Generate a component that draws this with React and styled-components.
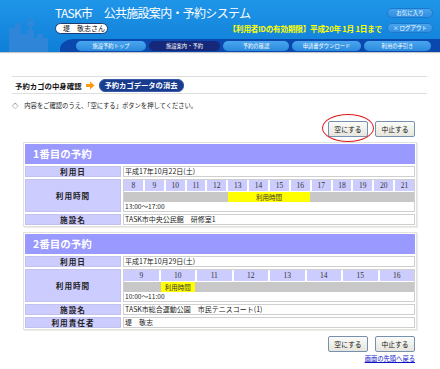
import React from 'react';
import styled, { createGlobalStyle } from 'styled-components';

const GlobalStyle = createGlobalStyle`
  body {
    margin: 0;
    background: #fff;
    font-family: "Noto Sans CJK JP", "Liberation Sans", sans-serif;
    color: #222;
  }
`;

const Header = styled.header`
  display: grid;
  grid-template-columns: 60px 1fr;
  grid-template-rows: 39px 13px;
  height: 52px;
  background: linear-gradient(#1f95e8, #0f7fd8);
  box-shadow: 0 1px 1px #c8c8c8;
`;

const Skyline = styled.svg`
  grid-column: 1;
  grid-row: 1 / 3;
  display: block;
`;

const Top = styled.div`
  display: flex;
  flex-direction: column;
  gap: 3px;
  padding: 6px 7px 0 0;
  margin-left: -5px;
`;

const TopRow = styled.div`
  display: flex;
  align-items: center;
  height: ${p => p.h}px;
`;

const SiteTitle = styled.h1`
  margin: 0;
  font-size: 12px;
  font-weight: 400;
  color: #fff;
  letter-spacing: -0.7px;
  white-space: nowrap;
`;

const NamePill = styled.div`
  width: 53px;
  height: 11px;
  box-sizing: border-box;
  border: 1px solid #1d3b70;
  border-radius: 6px;
  background: #fff;
  font-size: 7px;
  line-height: 9px;
  padding-left: 7px;
  color: #111;
`;

const Expiry = styled.div`
  margin-left: auto;
  margin-right: 5px;
  font-size: 7.6px;
  font-weight: 700;
  color: #ffff00;
  letter-spacing: -0.2px;
  white-space: nowrap;
`;

const SmallButton = styled.div`
  width: 46px;
  height: 10px;
  margin-left: ${p => (p.push ? 'auto' : '0')};
  border-radius: 5px;
  background: linear-gradient(#4aa6ee, #2c8ce0);
  box-shadow: inset 0 0 0 1px #1b78cc;
  color: #fff;
  font-size: 5.5px;
  line-height: 10px;
  text-align: center;
`;

const NavStrip = styled.nav`
  grid-column: 2;
  grid-row: 2;
  display: flex;
  align-items: flex-end;
  gap: 3px;
  padding: 3px 7px 1px 16px;
  background: #0a48ae;
  border-top-left-radius: 14px 10px;
`;

const NavTab = styled.div`
  width: ${p => p.w}px;
  height: 10px;
  border-radius: 5px;
  background: ${p => (p.active ? '#16287a' : 'linear-gradient(#4aa6ee, #2a8ade)')};
  color: #fff;
  font-size: 5.3px;
  line-height: 10px;
  text-align: center;
`;

const Page = styled.main`
  padding: 24px 13px 0 12px;
`;

const Crumbs = styled.div`
  display: flex;
  align-items: center;
  gap: 4px;
  height: 16px;
  border-top: 1px solid #dedede;
  border-bottom: 1px solid #dedede;
  padding-left: 3px;
`;

const CrumbText = styled.span`
  font-size: 7.4px;
  font-weight: 700;
  color: #111;
`;

const CrumbCurrent = styled.span`
  height: 11px;
  padding: 0 5px;
  border-radius: 6px;
  background: #183c8e;
  border: 1px solid #3a5aa8;
  color: #fff;
  font-size: 7.3px;
  font-weight: 700;
  line-height: 11px;
`;

const Note = styled.p`
  margin: 7px 0 0;
  height: 10px;
  font-size: 6.3px;
  line-height: 10px;
  color: #222;
  display: flex;
  align-items: center;
  gap: 6px;
`;

const Actions = styled.div`
  position: relative;
  display: flex;
  justify-content: flex-end;
  gap: 7px;
  margin: ${p => p.m};
`;

const Button = styled.button`
  width: 40px;
  height: 16px;
  padding: 0;
  border: 1px solid #7890b0;
  border-radius: 2px;
  background: linear-gradient(#fbfbf8, #e6e6de);
  font-family: inherit;
  font-size: 6.8px;
  line-height: 14px;
  color: #111;
`;

const Circle = styled.div`
  position: absolute;
  right: 41px;
  top: -7px;
  width: 50px;
  height: 26px;
  border: 1.5px solid #e01818;
  border-radius: 50%;
  pointer-events: none;
`;

const Card = styled.section`
  display: grid;
  grid-template-columns: 96px 1fr;
  grid-template-rows: ${p => p.rows};
  gap: 2px;
  margin: ${p => p.m} 10px 0 11px;
  padding: 1px;
  border: 1px solid #e2e2da;
  box-shadow: 1px 1px 0 #ececec;
`;

const CardTitle = styled.h2`
  grid-column: 1 / 3;
  margin: 0;
  padding-left: 8px;
  background: #9999ff;
  color: #fff;
  font-size: 10.5px;
  font-weight: 700;
  line-height: 20px;
`;

const Label = styled.div`
  display: flex;
  align-items: center;
  justify-content: center;
  box-sizing: border-box;
  background: #ccccff;
  border: 1px solid #c2c2ee;
  font-size: 7.6px;
  line-height: 9px;
  font-weight: 700;
  letter-spacing: 1px;
  color: #222;
`;

const Value = styled.div`
  display: flex;
  flex-direction: column;
  justify-content: center;
  box-sizing: border-box;
  border: 1px solid #cfcfcf;
  padding: ${p => (p.grid ? '0' : '0 0 0 1px')};
  font-size: 7px;
  line-height: 9px;
  color: #222;
  overflow: hidden;
`;

const Hours = styled.div`
  display: grid;
  grid-template-columns: repeat(${p => p.n}, 1fr);
  column-gap: 2px;
  height: ${p => p.h}px;
  background: ${p => p.bg};
  flex: none;
`;

const Hour = styled.div`
  background: #ccccff;
  text-align: center;
  font-family: "Liberation Serif", serif;
  font-size: 7.5px;
  line-height: 11px;
  color: #333;
`;

const Used = styled.div`
  grid-column: ${p => p.from} / ${p => p.to};
  background: #ffff00;
  text-align: center;
  font-size: 6.5px;
  line-height: 10px;
  color: #333;
`;

const TimeText = styled.div`
  height: 9px;
  font-size: 6.6px;
  line-height: 9px;
  padding-left: 1px;
  flex: none;
`;

const TopLink = styled.a`
  display: block;
  text-align: right;
  margin: 2px 12px 0 0;
  font-size: 6.3px;
  line-height: 9px;
  color: #1010c8;
  text-decoration: underline;
`;

const Arrow = () => (
  <svg width="9" height="9" viewBox="0 0 9 9">
    <path d="M0 3h4V0.5L8.5 4.5 4 8.5V6H0z" fill="#ff9a10" />
  </svg>
);

const reservations = [
  {
    no: 1,
    date: '平成17年10月22日(土)',
    hours: [8, 9, 10, 11, 12, 13, 14, 15, 16, 17, 18, 19, 20, 21],
    used: [13, 17],
    time: '13:00～17:00',
    place: 'TASK市中央公民館　研修室1',
  },
  {
    no: 2,
    date: '平成17年10月29日(土)',
    hours: [9, 10, 11, 12, 13, 14, 15, 16],
    used: [10, 11],
    time: '10:00～11:00',
    place: 'TASK市総合運動公園　市民テニスコート(1)',
    owner: '堤　敬志',
  },
];

const Reservation = ({ r, m }) => {
  const first = r.hours[0];
  const rows = '20px 11px 33px 11px' + (r.owner ? ' 11px' : '');
  return (
    <Card m={m} rows={rows}>
      <CardTitle>{r.no}番目の予約</CardTitle>
      <Label>利用日</Label>
      <Value>{r.date}</Value>
      <Label>利用時間</Label>
      <Value grid>
        <Hours n={r.hours.length} h={11} bg="#fff">
          {r.hours.map(h => (
            <Hour key={h}>{h}</Hour>
          ))}
        </Hours>
        <Hours n={r.hours.length} h={10} bg="#c8c8c8" style={{ marginTop: 1 }}>
          <Used from={r.used[0] - first + 1} to={r.used[1] - first + 1}>
            利用時間
          </Used>
        </Hours>
        <TimeText>{r.time}</TimeText>
      </Value>
      <Label>施設名</Label>
      <Value>{r.place}</Value>
      {r.owner && (
        <>
          <Label>利用責任者</Label>
          <Value>{r.owner}</Value>
        </>
      )}
    </Card>
  );
};

export default function App() {
  return (
    <>
      <GlobalStyle />
      <Header>
        <Skyline width="60" height="52" viewBox="0 0 60 52">
          <g fill="#2f86d8">
            <rect x="9" y="28" width="10" height="24" />
            <rect x="15" y="23" width="6" height="29" />
            <rect x="20" y="34" width="8" height="18" />
            <rect x="29" y="24" width="3" height="28" />
            <rect x="27" y="30" width="7" height="22" />
            <circle cx="30.5" cy="23" r="4" />
            <rect x="30" y="15" width="1" height="5" />
            <rect x="34" y="38" width="14" height="14" />
            <rect x="37" y="34" width="6" height="5" />
          </g>
          <g fill="#1f95e8">
            <rect x="28.5" y="22.3" width="4" height="1.4" />
          </g>
        </Skyline>
        <Top>
          <TopRow h={13}>
            <SiteTitle>TASK市　公共施設案内・予約システム</SiteTitle>
            <SmallButton push>お気に入り</SmallButton>
          </TopRow>
          <TopRow h={12}>
            <NamePill>堤　敬志さん</NamePill>
            <Expiry>【利用者IDの有効期限】平成20年 1月 1日まで</Expiry>
            <SmallButton>× ログアウト</SmallButton>
          </TopRow>
        </Top>
        <NavStrip>
          <NavTab w={70}>施設予約トップ</NavTab>
          <NavTab w={71} active>施設案内・予約</NavTab>
          <NavTab w={66}>予約の確認</NavTab>
          <NavTab w={69}>申請書ダウンロード</NavTab>
          <NavTab w={67}>利用の手引き</NavTab>
        </NavStrip>
      </Header>
      <Page>
        <Crumbs>
          <CrumbText>予約カゴの中身確認</CrumbText>
          <Arrow />
          <CrumbCurrent>予約カゴデータの消去</CrumbCurrent>
        </Crumbs>
        <Note>
          <span>◇</span>
          <span>内容をご確認のうえ、「空にする」ボタンを押してください。</span>
        </Note>
        <Actions m="10px 12px 0 0">
          <Circle />
          <Button>空にする</Button>
          <Button>中止する</Button>
        </Actions>
        <Reservation r={reservations[0]} m="5px" />
        <Reservation r={reservations[1]} m="5px" />
        <Actions m="6px 12px 0 0">
          <Button>空にする</Button>
          <Button>中止する</Button>
        </Actions>
        <TopLink href="#top">画面の先頭へ戻る</TopLink>
      </Page>
    </>
  );
}
